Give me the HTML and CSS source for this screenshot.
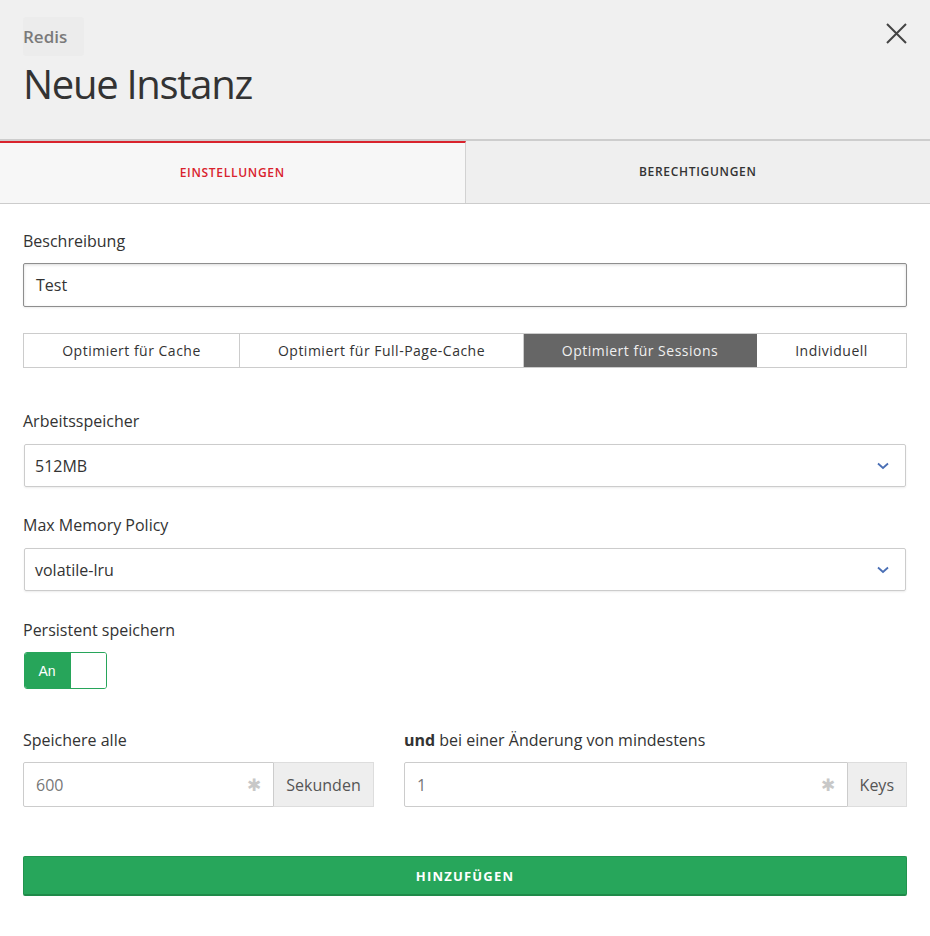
FILE: index.html
```html
<!DOCTYPE html>
<html lang="de">
<head>
<meta charset="utf-8">
<link rel="stylesheet" href="styles.css">
</head>
<body>
<div class="modal">
  <header class="head">
    <div class="head-text">
      <div class="crumb">Redis</div>
      <h1 class="title">Neue Instanz</h1>
    </div>
    <button class="close" aria-label="Schließen">
      <svg width="22" height="22" viewBox="0 0 22 22"><path d="M2 1L21 20M21 1L2 20" stroke="#444" stroke-width="2" fill="none"/></svg>
    </button>
  </header>
  <nav class="tabs">
    <div class="tab active">EINSTELLUNGEN</div>
    <div class="tab">BERECHTIGUNGEN</div>
  </nav>
  <main class="body">
    <label class="label">Beschreibung</label>
    <div class="text-input">Test</div>

    <div class="segments">
      <div class="seg s1">Optimiert für Cache</div>
      <div class="seg s2">Optimiert für Full-Page-Cache</div>
      <div class="seg s3 on">Optimiert für Sessions</div>
      <div class="seg s4">Individuell</div>
    </div>

    <label class="label l-mem">Arbeitsspeicher</label>
    <div class="select"><span>512MB</span>
      <svg width="12" height="8" viewBox="0 0 12 8"><path d="M1 1.5L6 6L11 1.5" stroke="#4a6fb5" stroke-width="1.8" fill="none"/></svg>
    </div>

    <label class="label l-pol">Max Memory Policy</label>
    <div class="select"><span>volatile-lru</span>
      <svg width="12" height="8" viewBox="0 0 12 8"><path d="M1 1.5L6 6L11 1.5" stroke="#4a6fb5" stroke-width="1.8" fill="none"/></svg>
    </div>

    <label class="label l-pers">Persistent speichern</label>
    <div class="toggle">
      <span class="toggle-on">An</span>
      <span class="toggle-knob"></span>
    </div>

    <div class="cols">
      <div class="col">
        <label class="label">Speichere alle</label>
        <div class="group">
          <div class="g-input"><span>600</span><span class="star">✱</span></div>
          <div class="addon a-sec">Sekunden</div>
        </div>
      </div>
      <div class="col">
        <label class="label"><b>und</b> bei einer Änderung von mindestens</label>
        <div class="group">
          <div class="g-input"><span>1</span><span class="star">✱</span></div>
          <div class="addon">Keys</div>
        </div>
      </div>
    </div>

    <button class="submit">HINZUFÜGEN</button>
  </main>
</div>
</body>
</html>
```
FILE: styles.css
```css
* { box-sizing: border-box; }
html, body { margin: 0; padding: 0; background: #fff; }
body { font-family: "Open Sans", "Liberation Sans", sans-serif; color: #333; width: 930px; }

.head {
  background: #f0f0f0;
  height: 141px;
  border-bottom: 2px solid #cdcdcd;
  display: flex;
  justify-content: space-between;
  padding: 17px 23px 0 23px;
}
.crumb {
  display: inline-block;
  font-size: 17px;
  font-weight: 600;
  color: #7a7a7a;
  background: #ececec;
  padding: 8px 17px 8px 0;
  line-height: 23px;
  border-radius: 3px;
}
.title {
  margin: 2px 0 0 0;
  font-family: "Open Sans", sans-serif;
  font-weight: 400;
  font-size: 40px;
  line-height: 52px;
  color: #333;
  letter-spacing: -1.3px;
}
.close {
  background: none;
  border: 0;
  padding: 0;
  margin: 6px 0 0 0;
  width: 22px;
  height: 22px;
  cursor: pointer;
}

.tabs {
  display: flex;
  height: 63px;
  border-bottom: 1px solid #cccccc;
}
.tab {
  flex: 1;
  display: flex;
  align-items: center;
  justify-content: center;
  font-size: 12px;
  font-weight: 600;
  letter-spacing: 0.7px;
  color: #333;
  background: #efefef;
  padding-bottom: 1px;
}
.tab.active {
  color: #d9232d;
  background: #f7f7f7;
  border-top: 2px solid #d9232d;
  border-right: 1px solid #d2d2d2;
  padding-bottom: 2px;
}

.body {
  padding: 26px 23px 40px 23px;
  display: flex;
  flex-direction: column;
}
.label {
  display: block;
  font-size: 16px;
  line-height: 22px;
  color: #333;
  margin-bottom: 11px;
}
.label b { font-weight: 700; }

.text-input {
  height: 44px;
  border: 1px solid #8e8e8e;
  border-radius: 2px;
  box-shadow: inset 0 1px 3px rgba(0,0,0,0.15), 0 1px 2px rgba(0,0,0,0.08);
  font-size: 16px;
  padding: 0 12px;
  display: flex;
  align-items: center;
}

.segments {
  display: flex;
  margin-top: 26px;
  height: 35px;
  border: 1px solid #cccccc;
}
.seg {
  display: flex;
  align-items: center;
  justify-content: center;
  font-size: 14px;
  letter-spacing: 0.5px;
  color: #333;
  border-right: 1px solid #cccccc;
}
.seg:last-child { border-right: 0; }
.s1 { width: 216px; }
.s2 { width: 284px; }
.s3 { width: 233px; }
.s4 { flex: 1; }
.seg.on { background: #666666; color: #f0f0f0; border-right-color: #666; }

.l-mem { margin-top: 42px; margin-bottom: 12px; }
.l-pol { margin-top: 27px; margin-bottom: 12px; }
.l-pers { margin-top: 28px; }

.select {
  margin: 0 1px;
  height: 43px;
  border: 1px solid #cccccc;
  border-radius: 2px;
  box-shadow: 0 1px 2px rgba(0,0,0,0.08);
  display: flex;
  align-items: center;
  justify-content: space-between;
  padding: 0 16px 0 10px;
  font-size: 16px;
}
.select svg { margin-top: 1px; }

.toggle {
  margin-left: 1px;
  width: 83px;
  height: 37px;
  border: 1px solid #27a55a;
  border-radius: 3px;
  display: flex;
  overflow: hidden;
}
.toggle-on {
  width: 46px;
  background: #27a55a;
  color: #fff;
  font-family: "Liberation Sans", Arial, sans-serif;
  font-size: 14px;
  display: flex;
  align-items: center;
  justify-content: center;
  padding-right: 2px;
}
.toggle-knob { flex: 1; background: #fff; }

.cols {
  display: grid;
  grid-template-columns: 351px 1fr;
  column-gap: 30px;
  margin-top: 40px;
}
.group {
  display: flex;
  height: 45px;
}
.g-input {
  flex: 1;
  border: 1px solid #cccccc;
  border-radius: 2px 0 0 2px;
  display: flex;
  align-items: center;
  justify-content: space-between;
  padding: 0 12px;
  font-size: 16px;
  color: #777;
}
.star { color: #c8c8c8; font-size: 17px; }
.addon {
  background: #eeeeee;
  border: 1px solid #dddddd;
  border-left: 0;
  display: flex;
  align-items: center;
  justify-content: center;
  padding: 0 12px;
  font-size: 16px;
  color: #555;
}
.a-sec { width: 100px; }

.submit {
  margin-top: 49px;
  height: 40px;
  width: 100%;
  background: #27a65b;
  border: 1px solid #22944f;
  border-bottom: 2px solid #1f8a49;
  border-radius: 2px;
  color: #fff;
  font-family: "Open Sans", sans-serif;
  font-weight: 700;
  font-size: 13px;
  letter-spacing: 1.2px;
}
```
